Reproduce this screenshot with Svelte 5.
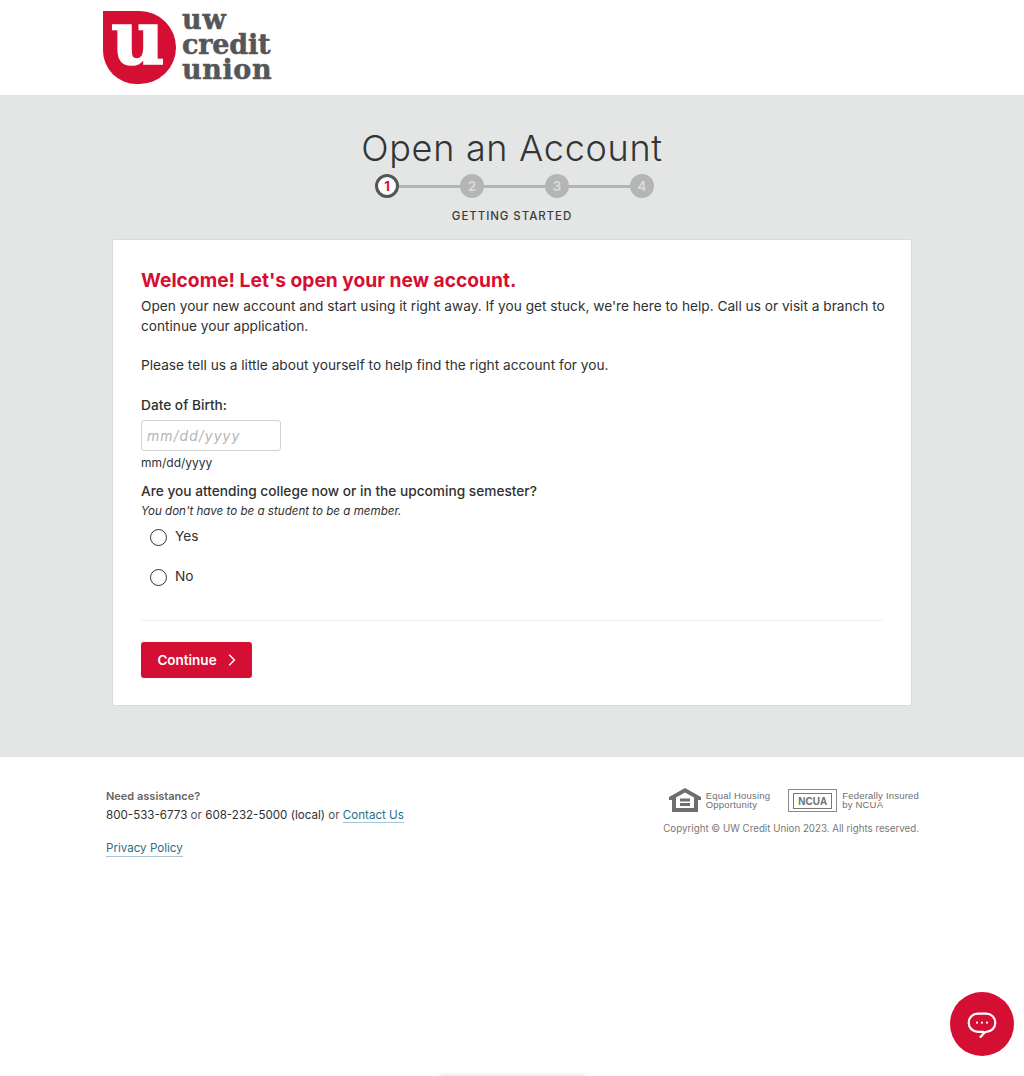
<script lang="ts">
  const steps = [1, 2, 3, 4];
</script>

<div class="page">
  <header class="site-header">
    <div class="logo">
      <div class="mark"><span>u</span></div>
      <div class="wordmark"><span>uw</span><span>credit</span><span>union</span></div>
    </div>
  </header>

  <main class="main">
    <h1>Open an Account</h1>
    <ol class="steps">
      {#each steps as step, i}
        {#if i > 0}<li class="line" aria-hidden="true"></li>{/if}
        <li class="step" class:current={i === 0}>{step}</li>
      {/each}
    </ol>
    <div class="step-name">GETTING STARTED</div>

    <section class="card">
      <h2>Welcome! Let's open your new account.</h2>
      <p class="intro">Open your new account and start using it right away. If you get stuck, we're here to help. Call us or visit a branch to continue your application.</p>
      <p class="intro second">Please tell us a little about yourself to help find the right account for you.</p>

      <label class="field-label" for="dob">Date of Birth:</label>
      <input id="dob" class="date" type="text" placeholder="mm/dd/yyyy" />
      <div class="hint">mm/dd/yyyy</div>

      <div class="question">Are you attending college now or in the upcoming semester?</div>
      <div class="note">You don't have to be a student to be a member.</div>
      <label class="radio"><span class="dot"></span><span class="radio-text">Yes</span></label>
      <label class="radio"><span class="dot"></span><span class="radio-text">No</span></label>

      <hr />

      <button type="button" class="continue">
        Continue
        <svg width="8" height="12" viewBox="0 0 8 12" fill="none" stroke="#fff" stroke-width="1.5"><path d="M1.2 .8 6.4 6 1.2 11.2" /></svg>
      </button>
    </section>
  </main>

  <footer class="footer">
    <div class="contact">
      <div class="need">Need assistance?</div>
      <div class="phones"><b>800-533-6773</b> or <b>608-232-5000 (local)</b> or <a href="#contact">Contact Us</a></div>
      <a class="privacy" href="#privacy">Privacy Policy</a>
    </div>
    <div class="legal">
      <div class="badges">
        <svg class="eho" width="32" height="24" viewBox="0 0 32 24" fill="#6d6e70">
          <path fill-rule="evenodd" d="M16 0 32 9v3h-3v12H3V12H0V9ZM7 9.500V20h18V9.500L16 4.500ZM11 10.500h10v3H11ZM11 15h10v3H11Z" />
        </svg>
        <div class="badge-text">Equal Housing<br />Opportunity</div>
        <div class="ncua"><span>NCUA</span></div>
        <div class="badge-text">Federally Insured<br />by NCUA</div>
      </div>
      <div class="copyright">Copyright © UW Credit Union 2023. All rights reserved.</div>
    </div>
  </footer>

  <div class="bottom-shade"></div>

  <button type="button" class="chat" aria-label="Chat">
    <svg width="30" height="30" viewBox="0 0 30 30" fill="none" stroke="#fff" stroke-width="2.200" stroke-linecap="round" stroke-linejoin="round">
      <path d="M16.500 22.800H10.800a9.100 9.100 0 0 1 0-18.200h8.400a9.100 9.100 0 0 1 0 18.200c-2.400 0-3.200 3.200-5.700 5" />
      <circle cx="10" cy="13.700" r="1.100" fill="#fff" stroke="none" />
      <circle cx="15" cy="13.700" r="1.100" fill="#fff" stroke="none" />
      <circle cx="20" cy="13.700" r="1.100" fill="#fff" stroke="none" />
    </svg>
  </button>
</div>

<style>
  :global(body) {
    margin: 0;
    background: #fff;
    font-family: Inter, "Open Sans", "Liberation Sans", sans-serif;
    color: #2f3131;
  }
  .page {
    position: relative;
    height: 1076px;
    overflow: hidden;
  }
  .site-header {
    border-bottom: 1px solid #dfe1e0;
    padding: 11px 0 0 103px;
    height: 84px;
  }
  .logo {
    display: flex;
    gap: 6px;
  }
  .mark {
    width: 73px;
    height: 73px;
    background: #d50e33;
    border-radius: 0 50% 50% 46%;
    display: flex;
    justify-content: center;
  }
  .mark span {
    color: #fff;
    font: 700 74px/54px "DejaVu Serif", serif;
    -webkit-text-stroke: 1.5px #fff;
    margin-left: -3px;
  }
  .wordmark {
    display: flex;
    flex-direction: column;
    color: #55565a;
    font: 700 27px/25px "DejaVu Serif", serif;
    -webkit-text-stroke: 0.5px #55565a;
    letter-spacing: -0.2px;
    margin-top: -4px;
  }
  .wordmark span:first-child {
    letter-spacing: 0.8px;
  }
  .wordmark span:last-child {
    letter-spacing: 0.6px;
  }
  .main {
    background: #e4e6e5;
    height: 661px;
    display: flex;
    flex-direction: column;
    align-items: center;
    border-bottom: 1px solid #e0e2e1;
    box-sizing: border-box;
  }
  h1 {
    margin: 29px 0 0;
    font-size: 36px;
    line-height: 46px;
    font-weight: 300;
    color: #333535;
    letter-spacing: 0.7px;
  }
  .steps {
    list-style: none;
    padding: 0;
    display: flex;
    align-items: center;
    margin: 3px 0 0 5px;
    height: 24px;
  }
  .step {
    width: 24px;
    height: 24px;
    box-sizing: border-box;
    border-radius: 50%;
    background: #b4b5b5;
    color: #d9dada;
    font-size: 13px;
    font-weight: 700;
    display: flex;
    align-items: center;
    justify-content: center;
  }
  .step.current {
    background: #fff;
    border: 3px solid #55565a;
    color: #d50e33;
  }
  .line {
    width: 61px;
    height: 3px;
    background: #b4b5b5;
  }
  .step-name {
    margin-top: 10px;
    font-size: 11.500px;
    line-height: 16px;
    font-weight: 500;
    letter-spacing: 0.93px;
    color: #3b3d3d;
  }
  .card {
    width: 800px;
    height: 467px;
    margin-top: 15px;
    box-sizing: border-box;
    background: #fff;
    border: 1px solid #d9dbda;
    border-radius: 3px;
    padding: 28px 28px 0;
  }
  h2 {
    margin: 0;
    font-size: 19.200px;
    line-height: 24px;
    font-weight: 700;
    color: #d50e33;
  }
  .intro {
    margin: 4px -6px 0 0;
    font-size: 13.680px;
    line-height: 20px;
  }
  .intro.second {
    margin-top: 19px;
  }
  .field-label {
    display: block;
    margin-top: 20px;
    font-size: 13.700px;
    line-height: 20px;
    font-weight: 500;
  }
  .date {
    display: block;
    margin-top: 5px;
    width: 140px;
    height: 31px;
    box-sizing: border-box;
    padding: 0 5px;
    border: 1px solid #d0d1d1;
    border-radius: 3px;
    font: italic 14px Inter, sans-serif;
    letter-spacing: 1px;
  }
  .date::placeholder {
    color: #b5b6b6;
    opacity: 1;
  }
  .hint {
    margin-top: 3px;
    font-size: 12px;
    line-height: 18px;
  }
  .question {
    margin-top: 9px;
    font-size: 13.700px;
    line-height: 20px;
    font-weight: 500;
  }
  .note {
    margin-top: 1px;
    font-size: 11.600px;
    line-height: 18px;
    font-style: italic;
  }
  .radio {
    display: flex;
    align-items: center;
    gap: 8px;
    height: 40px;
    padding-left: 9px;
    font-size: 13.700px;
    margin-top: -3px;
  }
  .radio + .radio {
    margin-top: 0;
  }
  .radio-text {
    margin-top: -2px;
  }
  .dot {
    width: 15px;
    height: 15px;
    border: 1.500px solid #333;
    border-radius: 50%;
    margin-top: 1px;
  }
  hr {
    margin: 23px 0 0;
    border: 0;
    border-top: 1px solid #efefef;
  }
  .continue {
    margin-top: 21px;
    width: 111px;
    height: 36px;
    display: flex;
    align-items: center;
    justify-content: center;
    gap: 11px;
    border: 0;
    border-radius: 3px;
    background: #d50e33;
    color: #fff;
    font: 600 13.500px Inter, sans-serif;
  }
  .footer {
    display: flex;
    justify-content: space-between;
    padding: 30px 105px 0 106px;
  }
  .contact {
    font-size: 11.600px;
    line-height: 18px;
    color: #555;
  }
  .need {
    font-size: 11px;
    font-weight: 600;
    color: #666;
  }
  .phones {
    margin-top: 1px;
  }
  .phones b {
    font-weight: 400;
    color: #2f3131;
  }
  .contact a {
    color: #2a6f86;
    text-decoration: none;
    border-bottom: 1px solid #a9c6d0;
  }
  .privacy {
    display: inline-block;
    line-height: 15px;
    margin-top: 17px;
  }
  .legal {
    text-align: right;
  }
  .badges {
    display: flex;
    align-items: center;
    justify-content: flex-end;
    margin-top: 1px;
  }
  .badge-text {
    text-align: left;
    font: 9.500px/9px "Liberation Sans", sans-serif;
    color: #6d6e70;
    letter-spacing: 0.2px;
  }
  .eho {
    margin-right: 5px;
  }
  .ncua {
    width: 49px;
    height: 23px;
    margin: 0 5px 0 18px;
    box-sizing: border-box;
    border: 1px solid #888;
    padding: 2px;
    display: flex;
  }
  .ncua span {
    flex: 1;
    border: 1px solid #777;
    margin: 1px 2px 0;
    font: 700 10px/15px "Liberation Sans", sans-serif;
    color: #6d6e70;
    text-align: center;
  }
  .copyright {
    margin-top: 10px;
    font-size: 9.750px;
    line-height: 14px;
    color: #777;
  }
  .bottom-shade {
    position: absolute;
    left: 440px;
    width: 145px;
    bottom: -6px;
    height: 6px;
    box-shadow: 0 0 4px rgba(0, 0, 0, 0.2);
  }
  .chat {
    position: absolute;
    right: 10px;
    bottom: 20px;
    width: 64px;
    height: 64px;
    border: 0;
    padding: 0;
    border-radius: 50%;
    background: #d50e33;
    display: flex;
    align-items: center;
    justify-content: center;
  }
</style>
